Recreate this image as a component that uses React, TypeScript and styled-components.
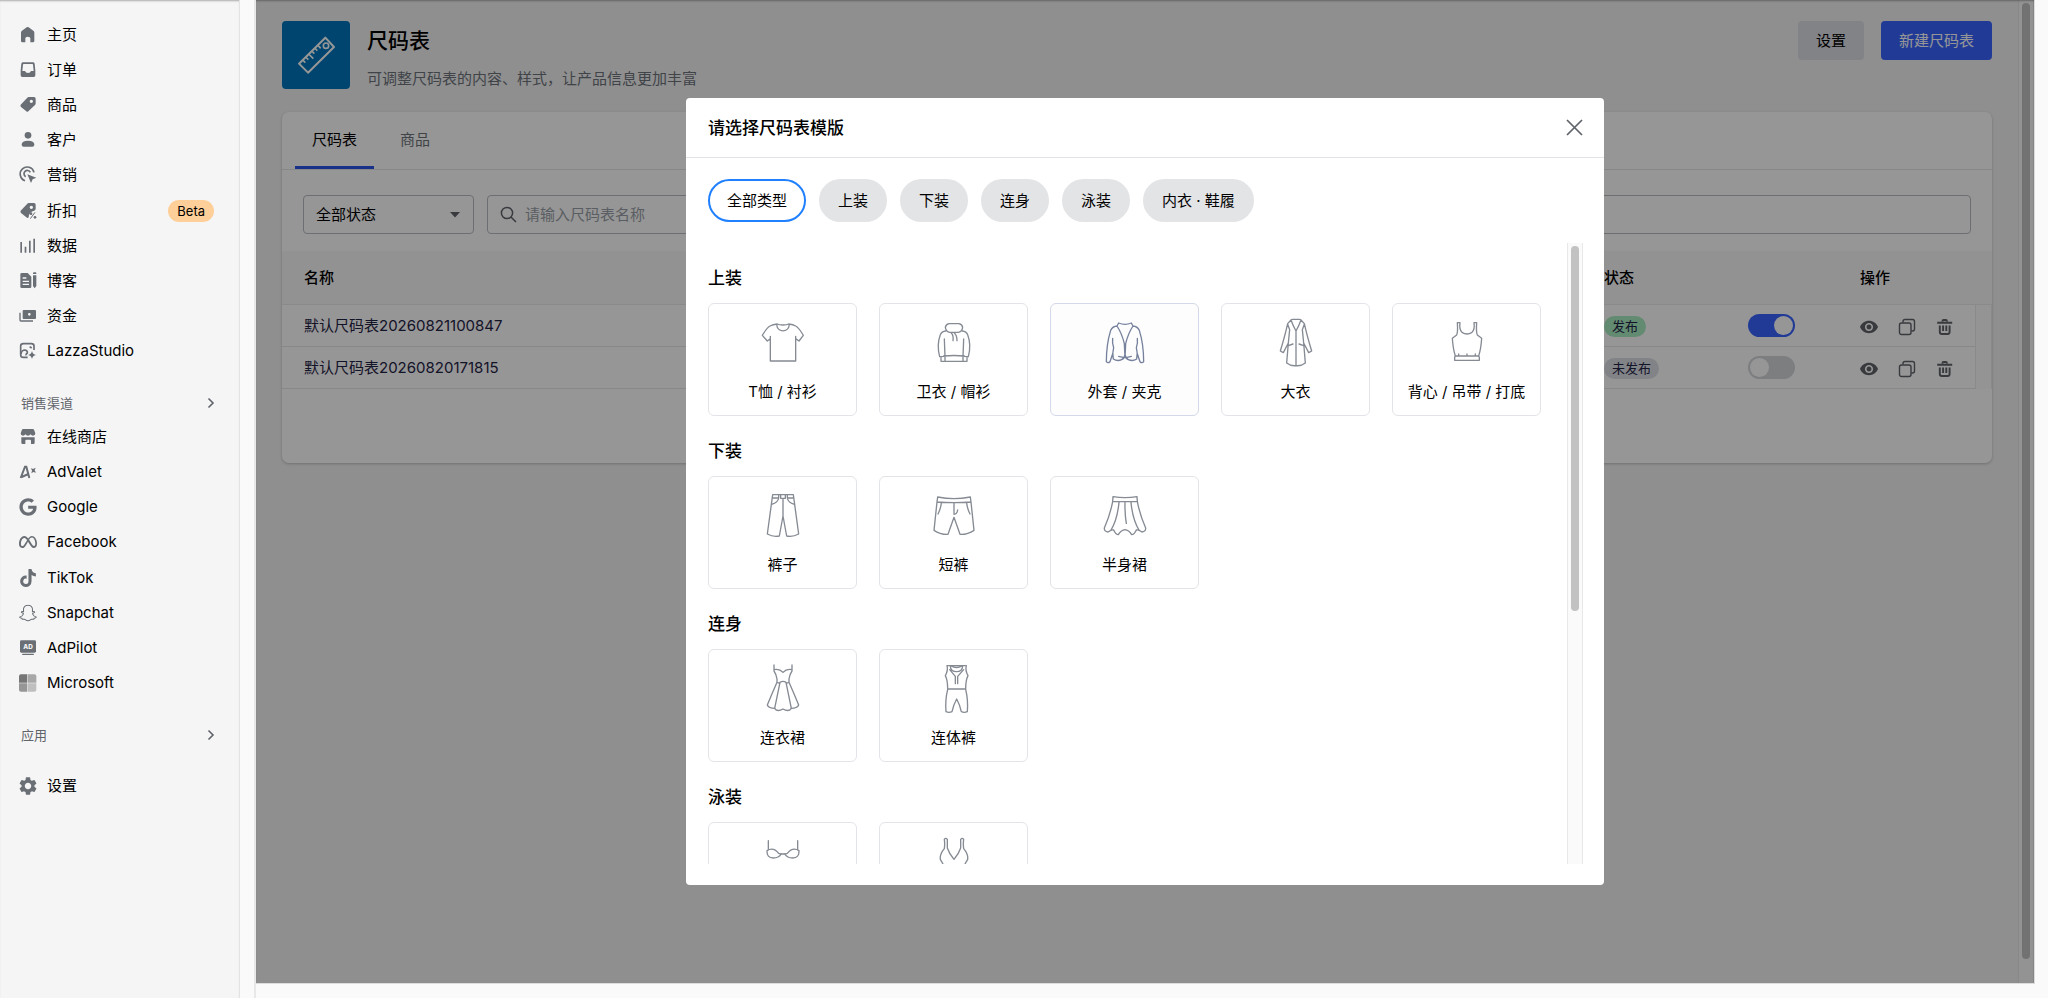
import React, { useState } from "react";
import styled, { createGlobalStyle } from "styled-components";
import { FaGoogle, FaTiktok } from "react-icons/fa";
import { SiMeta, SiSnapchat } from "react-icons/si";
import { MdSettings, MdVisibility } from "react-icons/md";

const GlobalStyle = createGlobalStyle`
  *, *::before, *::after { box-sizing: border-box; }
  body {
    margin: 0;
    background: #fafafa;
    color: #000;
    font-family: Inter, "Noto Sans CJK SC", sans-serif;
    font-size: 15px;
    line-height: 24px;
  }
  button, input, select { font: inherit; color: inherit; }
  ul { list-style: none; margin: 0; padding: 0; }
  h1, h2, h3, p { margin: 0; }
`;

/* ---------- shell ---------- */

const Shell = styled.div`
  display: flex;
  height: 100vh;
`;

const Sidebar = styled.nav`
  flex: none;
  width: 240px;
  padding: 17px 0;
  background: #f5f5f5;
  border-right: 1px solid #e3e3e3;
  box-shadow: inset 0 2px 2px -1px rgba(0, 0, 0, 0.3);
  overflow: hidden;
`;

const SidebarTrack = styled.div`
  flex: none;
  width: 16px;
  border-right: 2px solid #e8e8e8;
`;

const NavList = styled.ul<{ $height: number }>`
  display: grid;
  grid-auto-rows: 1fr;
  height: ${(p) => p.$height}px;
`;

const NavItem = styled.li`
  display: flex;
`;

const NavLink = styled.a`
  flex: 1;
  display: flex;
  align-items: center;
  gap: 10px;
  padding: 0 25px 0 19px;
  color: #000;
  text-decoration: none;
  svg {
    flex: none;
    width: 18px;
    height: 18px;
    color: #6a6e75;
  }
`;

const Beta = styled.span`
  margin-left: auto;
  padding: 0 9px;
  border-radius: 11px;
  background: #ffcf99;
  font-size: 13px;
  line-height: 22px;
`;

const SectionButton = styled.button`
  display: flex;
  align-items: center;
  justify-content: space-between;
  width: 100%;
  height: 33px;
  margin-top: 17px;
  padding: 0 24px 0 21px;
  border: 0;
  background: none;
  color: #5f636a;
  font-size: 13px;
`;

const SettingsList = styled(NavList)`
  margin-top: 17px;
`;

const Frame = styled.div`
  position: relative;
  flex: 1;
  display: flex;
  min-width: 0;
  margin: 0 13px 14px 0;
  border-right: 1px solid #dcdcdc;
  border-bottom: 1px solid #dcdcdc;
`;

const Page = styled.main`
  flex: 1;
  min-width: 0;
  padding: 21px 26px 0;
  background: #f3f3f3;
`;

const Track = styled.div<{ $width: number }>`
  flex: none;
  width: ${(p) => p.$width}px;
  padding: 3px 3px 0;
  border: 1px solid #e8e8e8;
  border-width: 0 1px;
  background: #fafafa;
`;

const Thumb = styled.div<{ $size: string }>`
  height: ${(p) => p.$size};
  border-radius: 5px;
  background: #c2c2c2;
`;

/* ---------- page header ---------- */

const PageHeader = styled.header`
  display: flex;
  align-items: flex-start;
  gap: 17px;
  margin-bottom: 21px;
`;

const AppLogo = styled.div`
  flex: none;
  width: 68px;
  height: 68px;
  border-radius: 4px;
  overflow: hidden;
  background: #0076bf;
  svg { display: block; width: 68px; height: 68px; }
`;

const Heading = styled.div`
  flex: 1;
`;

const Title = styled.h1`
  font-size: 21px;
  line-height: 40px;
  font-weight: 500;
`;

const Subtitle = styled.p`
  margin-top: 6px;
  color: #6e747d;
`;

const Actions = styled.div`
  display: flex;
  gap: 17px;
`;

const Button = styled.button<{ $primary?: boolean }>`
  height: 39px;
  padding: 0 18px;
  border: 0;
  border-radius: 4px;
  background: ${(p) => (p.$primary ? "#3864ff" : "#dcdfe6")};
  color: ${(p) => (p.$primary ? "#fff" : "#000")};
`;

/* ---------- list card ---------- */

const Card = styled.section`
  padding-bottom: 74px;
  border-radius: 7px;
  background: #fff;
  box-shadow: 0 1px 3px rgba(0, 0, 0, 0.22);
`;

const Tabs = styled.div`
  display: flex;
  gap: 9px;
  height: 58px;
  padding: 0 13px;
  border-bottom: 1px solid #e3e5e8;
`;

const Tab = styled.button<{ $active?: boolean }>`
  min-width: 64px;
  padding: 2px 17px 0;
  border: 0;
  border-bottom: 3px solid ${(p) => (p.$active ? "#2a52e8" : "transparent")};
  border-radius: 2px 2px 0 0;
  background: none;
  color: ${(p) => (p.$active ? "#000" : "#6e747d")};
`;

const Filters = styled.div`
  display: flex;
  gap: 13px;
  padding: 25px 21px 17px;
`;

const Field = styled.div<{ $grow?: boolean }>`
  flex: ${(p) => (p.$grow ? "1" : "0 0 171px")};
  display: flex;
  align-items: center;
  gap: 8px;
  height: 39px;
  padding: 0 12px;
  border: 1px solid #b9bcc2;
  border-radius: 4px;
  svg { flex: none; color: #5f636a; }
`;

const SelectBox = styled.select`
  flex: 1;
  min-width: 0;
  appearance: none;
  padding: 0;
  border: 0;
  background: none;
`;

const SearchInput = styled.input`
  flex: 1;
  min-width: 0;
  padding: 0;
  border: 0;
  background: none;
  &::placeholder { color: #9a9fa8; opacity: 1; }
`;

const Table = styled.table`
  width: 100%;
  table-layout: fixed;
  border-collapse: separate;
  border-spacing: 0;
`;

const Th = styled.th<{ $width?: number }>`
  width: ${(p) => (p.$width ? `${p.$width}px` : "auto")};
  height: 54px;
  padding: 0 17px;
  border-bottom: 1px solid #e9ebee;
  background: #f9f9f9;
  text-align: left;
  font-weight: 500;
  &:first-child { padding-left: 22px; }
  &:last-child { padding: 0; }
`;

const Td = styled.td`
  height: 42px;
  padding: 0 17px;
  border-bottom: 1px solid #e6e8eb;
  color: #1f2345;
  &:first-child { padding-left: 22px; }
`;

const GutterCell = styled.td`
  padding: 0;
  border: solid #ebebeb;
  border-width: 0 1px;
  background: #fcfcfc;
`;

const Tag = styled.span<{ $on: boolean }>`
  display: inline-block;
  padding: 0 8px;
  border-radius: 11px;
  background: ${(p) => (p.$on ? "#a9ecc2" : "#dcdfe6")};
  font-size: 13px;
  line-height: 21px;
`;

const Switch = styled.input`
  display: block;
  appearance: none;
  width: 47px;
  height: 23px;
  margin: 0;
  padding: 2px;
  border-radius: 12px;
  background: #d4d6d9;
  &::before {
    content: "";
    display: block;
    width: 19px;
    height: 19px;
    border-radius: 50%;
    background: #fff;
  }
  &:checked { background: #3864ff; }
  &:checked::before { margin-left: auto; }
`;

const RowActions = styled.div`
  display: flex;
  gap: 20px;
  padding-top: 3px;
`;

const IconButton = styled.button`
  display: flex;
  padding: 0;
  border: 0;
  background: none;
  color: #5f636a;
`;

/* ---------- dialog ---------- */

const Overlay = styled.div`
  position: absolute;
  inset: 0;
  display: flex;
  align-items: center;
  justify-content: center;
  background: rgba(0, 0, 0, 0.41);
  box-shadow: inset 0 2px 2px -1px rgba(0, 0, 0, 0.3);
`;

const Dialog = styled.div`
  display: flex;
  flex-direction: column;
  width: 918px;
  max-width: 94%;
  height: 80%;
  padding-bottom: 21px;
  border-radius: 4px;
  background: #fff;
`;

const DialogHeader = styled.header`
  flex: none;
  display: flex;
  align-items: center;
  justify-content: space-between;
  height: 60px;
  padding: 0 21px 0 22px;
  border-bottom: 1px solid #e1e3e6;
`;

const DialogTitle = styled.h2`
  font-size: 17px;
  font-weight: 500;
`;

const Pills = styled.div`
  flex: none;
  display: flex;
  flex-wrap: wrap;
  gap: 13px;
  padding: 21px 22px;
`;

const Pill = styled.button<{ $active: boolean }>`
  height: 43px;
  padding: 0 17px;
  border: 2px solid ${(p) => (p.$active ? "#2080ff" : "#e3e4e6")};
  border-radius: 22px;
  background: ${(p) => (p.$active ? "#fff" : "#e3e4e6")};
`;

const ScrollArea = styled.div`
  flex: 1;
  display: flex;
  min-height: 0;
  padding: 0 21px 0 22px;
`;

const Groups = styled.div`
  flex: 1;
  display: flex;
  flex-direction: column;
  gap: 22px;
  overflow: hidden;
  padding: 22px 26px 0 0;
`;

const Group = styled.section`
  flex: none;
`;

const GroupTitle = styled.h3`
  margin-bottom: 12px;
  font-size: 17px;
  line-height: 26px;
  font-weight: 500;
`;

const TemplateGrid = styled.div`
  display: grid;
  grid-template-columns: repeat(5, 1fr);
  gap: 22px;
`;

const TemplateCard = styled.button<{ $hover?: boolean }>`
  display: flex;
  flex-direction: column;
  align-items: center;
  gap: 13px;
  height: 113px;
  padding: 13px 0 0;
  border: 1px solid ${(p) => (p.$hover ? "#d3d9e8" : "#e3e4e8")};
  border-radius: 6px;
  background: ${(p) => (p.$hover ? "#fdfdfe" : "#fff")};
  white-space: nowrap;
  svg {
    flex: none;
    width: 50px;
    height: 50px;
    overflow: visible;
    color: ${(p) => (p.$hover ? "#76819c" : "#858a93")};
  }
`;

/* ---------- icons ---------- */

const Glyph = ({ children }: { children: React.ReactNode }) => (
  <svg viewBox="0 0 54 54" fill="currentColor" fillRule="evenodd" aria-hidden="true">
    {children}
  </svg>
);

const TAG = "M29 3H45Q50 3 50 8V22Q50 25 48 27L28 46Q25 49 22 46L6 33Q3 30 5 26L25 5Q27 3 29 3Z";

const navGlyphs: Record<string, React.ReactNode> = {
  home: (
    <Glyph>
      <path d="M6 20Q6 16 9 14L23 4Q26 2 29 4L43 14Q46 16 46 20V45Q46 49 42 49H34V37Q34 32 26 32Q19 32 19 37V49H10Q6 49 6 45Z" />
    </Glyph>
  ),
  orders: (
    <Glyph>
      <path d="M12 4H42Q46 4 47 8L49 28V43Q49 48 44 48H10Q5 48 5 43V28L7 8Q8 4 12 4ZM14 9Q12 9 12 11L10 30H18Q20 36 27 36Q34 36 36 30H44L42 11Q42 9 40 9Z" />
    </Glyph>
  ),
  tag: (
    <Glyph>
      <path d={`${TAG}M37 11A5 5 0 1 0 37 21A5 5 0 1 0 37 11Z`} />
    </Glyph>
  ),
  person: (
    <Glyph>
      <circle cx="27" cy="13" r="10" />
      <path d="M8 41Q8 29 27 29Q46 29 46 41Q46 47 40 47H14Q8 47 8 41Z" />
    </Glyph>
  ),
  target: (
    <Glyph>
      <g fill="none" stroke="currentColor" strokeWidth="5">
        <path d="M18 44A21 21 0 1 1 45 19" />
        <path d="M20 32A10 10 0 1 1 34 19" />
      </g>
      <path d="M25 25L52 35L41 40L36 51Z" />
    </Glyph>
  ),
  discount: (
    <Glyph>
      <path d="M29 3H45Q50 3 50 8V22L46 26Q30 28 29 46Q26 50 22 46L6 33Q3 30 5 26L25 5Q27 3 29 3ZM37 11A5 5 0 1 0 37 21A5 5 0 1 0 37 11Z" />
      <circle cx="36" cy="35" r="4" />
      <circle cx="48" cy="46" r="4" />
      <path d="M34 50L48 31" fill="none" stroke="currentColor" strokeWidth="3" />
    </Glyph>
  ),
  bars: (
    <Glyph>
      <path d="M4 15H9V47H4ZM17 29H22V47H17ZM30 11H35V47H30ZM43 5H48V47H43Z" />
    </Glyph>
  ),
  blog: (
    <Glyph>
      <path d="M8 3H26L37 14V44Q37 48 33 48H8Q4 48 4 44V7Q4 3 8 3ZM11 16V20H22V16ZM11 26V30H30V26ZM11 35V39H30V35Z" />
      <path d="M42 10H52V42L47 49L42 42ZM42 6V4Q42 1 45 1H49Q52 1 52 4V6Z" />
    </Glyph>
  ),
  money: (
    <Glyph>
      <path d="M14 9H48Q51 9 51 12V33Q51 36 48 36H14Q11 36 11 33V12Q11 9 14 9ZM31 18A4 4 0 1 0 31 26A4 4 0 1 0 31 18Z" />
      <path d="M3 17V39Q3 42 6 42H42" fill="none" stroke="currentColor" strokeWidth="4" />
    </Glyph>
  ),
  studio: (
    <Glyph>
      <g fill="none" stroke="currentColor" strokeWidth="5">
        <path d="M26 46H13Q5 46 5 38V12Q5 5 13 5H37Q45 5 45 12V24" />
        <path d="M6 36Q8 24 18 24Q26 25 25 33Q20 36 21 40" />
        <path d="M32 14L38 18" />
      </g>
      <path d="M39 27Q41 37 51 39Q41 41 39 51Q37 41 27 39Q37 37 39 27Z" />
    </Glyph>
  ),
  store: (
    <Glyph>
      <path d="M12 3H42Q44 3 45 5L49 16Q49 23 42 23Q37 23 35 19Q32 23 27 23Q22 23 19 19Q17 23 12 23Q5 23 5 16L9 5Q10 3 12 3Z" />
      <path d="M7 28H47V44Q47 48 43 48H36V38Q36 35 33 35H22Q19 35 19 38V48H11Q7 48 7 44Z" />
    </Glyph>
  ),
  advalet: (
    <Glyph>
      <path d="M5 45L18 11H22L31 45M8 42L28 33" fill="none" stroke="currentColor" strokeWidth="6" />
      <path d="M36 15L42 18L50 14L47 22L51 29L43 27L37 31L39 23Z" />
    </Glyph>
  ),
  adpilot: (
    <Glyph>
      <rect x="3" y="4" width="48" height="37" rx="4" />
      <rect x="9" y="44" width="36" height="4" rx="2" />
      <text x="27" y="29" textAnchor="middle" fontSize="19" fontWeight="800" fill="#f5f5f5">AD</text>
    </Glyph>
  ),
  microsoft: (
    <Glyph>
      <path d="M6 1H25V26H0V7Q0 1 6 1Z" fill="#767676" />
      <path d="M27 1H46Q52 1 52 7V26H27Z" fill="#a8a8a8" />
      <path d="M0 28H25V53H6Q0 53 0 47Z" fill="#969696" />
      <path d="M27 28H52V47Q52 53 46 53H27Z" fill="#bfbfbf" />
    </Glyph>
  ),
  google: <FaGoogle aria-hidden="true" />,
  meta: <SiMeta aria-hidden="true" />,
  tiktok: <FaTiktok aria-hidden="true" />,
  snapchat: <SiSnapchat viewBox="-1 -1 26 26" fill="none" stroke="currentColor" strokeWidth="1.5" aria-hidden="true" />,
  settings: <MdSettings viewBox="2 2 20 20" aria-hidden="true" />,
};

const Chevron = () => (
  <svg width="8" height="12" viewBox="0 0 8 12" fill="none" stroke="currentColor" strokeWidth="1.6" aria-hidden="true">
    <path d="M1.5 1.5L6 6L1.5 10.5" />
  </svg>
);

const RulerIcon = () => (
  <svg viewBox="0 0 204 204" fill="none" stroke="#fff" strokeWidth="6" strokeLinejoin="round" aria-hidden="true">
    <path d="M130 50L156 78L78 155L51 128Z" />
    <circle cx="132" cy="74" r="8" strokeWidth="5" />
    <path d="M62 117L70 125M71 108L79 116M80 99L94 113M89 90L97 98M98 81L106 89M107 72L116 82" strokeWidth="5" />
  </svg>
);

const CopyIcon = () => (
  <svg width="18" height="18" viewBox="0 0 18 18" fill="none" stroke="currentColor" strokeWidth="1.4" aria-hidden="true">
    <rect x="1.5" y="5" width="11.5" height="11.5" rx="2" />
    <path d="M5 4.6V3.4Q5 1.5 7 1.5H14.5Q16.5 1.5 16.5 3.5V11Q16.5 13 14.5 13H13.4" />
  </svg>
);

const TrashIcon = () => (
  <svg width="18" height="18" viewBox="0 0 18 18" fill="none" stroke="currentColor" strokeWidth="1.9" aria-hidden="true">
    <path d="M1.2 4.8H16.2M6.4 3.4Q6.4 2 7.6 2H9.8Q11 2 11 3.4M3.8 7.4V14Q3.8 16 5.8 16H11.6Q13.6 16 13.6 14V7.4M7.1 7.4V13M10.3 7.4V13" />
  </svg>
);

const garments: Record<string, string> = {
  tee: "M58 21C50 22 42 24 36 27C26 32 20 44 13 55L28 72L37 65M37 58V132H113V58M113 65L123 72L136 55C129 44 123 32 113 27C108 24 100 22 92 21M58 21C64 25 86 25 92 21M56 22C58 48 92 48 94 22",
  hoodie: "M60 20H90Q100 22 101 32Q98 45 88 46H62Q52 45 49 32Q50 22 60 20ZM50 42Q38 43 34 53C26 74 26 96 32 119L44 118M100 42Q112 43 116 53C124 74 124 96 118 119L106 118M46 66L48 118M104 66L102 118M44 117Q75 114 106 117M36 120V133H114V120M48 118V133M102 118V133M67 48Q74 55 72 71M76 48Q84 55 84 71",
  jacket: "M56 18Q75 26 94 18L99 27Q84 50 77 80L75 122L73 80Q66 50 51 27ZM51 27Q38 28 32 40C24 66 19 100 19 134Q24 140 30 134L38 110M99 27Q112 28 118 40C126 66 131 100 131 134Q126 140 120 134L112 110M38 64Q36 80 41 92Q36 110 40 126Q52 134 65 128Q74 124 75 112M112 64Q114 80 109 92Q114 110 110 126Q98 134 85 128Q76 124 75 112M56 118L72 122M94 118L78 122",
  coat: "M60 9L64 7H86L90 9Q84 26 75 42Q66 26 60 9ZM60 9L50 20Q42 56 28 102L37 107L52 78L56 38L50 22M90 9L100 20Q108 56 122 102L113 107L98 78L94 38L100 22M52 78L47 138Q60 148 75 146Q90 148 103 138L98 78M75 42V146M52 86L66 81M84 81L98 86",
  tank: "M46 17H54Q51 38 60 46Q75 56 90 46Q99 38 96 17H104Q102 46 106 54L119 64Q117 96 110 117H40Q33 96 31 64L44 54Q48 46 46 17ZM42 117Q38 117 38 121V130H112V121Q112 117 108 117M50 117V111M75 117V111M100 117V111",
  trousers: "M44 14H106L122 132Q104 142 86 138L75 78L64 138Q46 142 28 132ZM43 24H62M68 14V25H82V14M88 24H107M62 14V24Q60 38 41 43M88 14V24Q90 38 109 43M75 26V78",
  shorts: "M26 21Q75 31 124 21L126 36Q75 40 24 36ZM24 36L15 121Q34 134 57 133L75 82L93 133Q116 134 135 121L126 36M75 40V73Q84 73 86 60M37 38Q36 54 27 72M113 38Q114 54 123 72",
  skirt: "M39 20Q75 26 111 20L112 35H38ZM38 35Q30 76 13 114Q12 124 24 126M112 35Q120 76 137 114Q138 124 126 126M24 126Q35 118 41 120Q47 134 55 134Q64 120 75 119Q86 120 95 134Q103 134 109 120Q115 118 126 126M57 37Q52 90 32 122M75 37Q74 70 79 100M93 37Q98 90 118 122",
  dress: "M48 6V24Q54 32 57 48V58L43 90L28 126Q32 136 51 136M102 6V24Q96 32 93 48V58L107 90L122 126Q118 136 99 136M48 20Q64 16 75 28Q86 16 102 20M57 58Q66 62 66 58Q75 52 84 58Q84 62 93 58M66 58L50 136M84 58L100 136M50 136Q58 148 75 138Q92 148 100 136",
  jumpsuit: "M54 8H112Q108 22 117 38Q110 52 110 78H56Q56 52 49 38Q58 22 54 8ZM64 9Q64 26 83 26Q100 26 101 9M66 9Q83 18 99 9M62 20L79 40V62M104 20L86 40V62M56 79Q48 112 51 146Q60 150 69 146Q74 124 83 108Q92 124 97 146Q106 150 115 146Q118 112 110 79",
  bikini: "M31 14V42M119 14V42M27 44Q46 32 62 52Q75 57 88 52Q104 32 123 44Q124 66 104 66Q88 66 80 54H70Q62 66 46 66Q26 66 27 44Z",
  swimsuit: "M46 38Q48 24 46 10Q50 4 55 10V36Q60 52 75 70Q90 52 95 36V10Q100 4 104 10Q102 24 104 38Q118 54 116 70L108 84Q116 110 112 130H38Q34 110 42 84L34 70Q32 54 46 38Z",
};

const Garment = ({ name }: { name: string }) => (
  <svg viewBox="0 0 150 150" fill="none" stroke="currentColor" strokeWidth="4" strokeLinejoin="round" strokeLinecap="round" aria-hidden="true">
    <path d={garments[name]} />
  </svg>
);

/* ---------- data ---------- */

type NavEntry = { icon: string; label: string; beta?: boolean };

const primaryNav: NavEntry[] = [
  { icon: "home", label: "主页" },
  { icon: "orders", label: "订单" },
  { icon: "tag", label: "商品" },
  { icon: "person", label: "客户" },
  { icon: "target", label: "营销" },
  { icon: "discount", label: "折扣", beta: true },
  { icon: "bars", label: "数据" },
  { icon: "blog", label: "博客" },
  { icon: "money", label: "资金" },
  { icon: "studio", label: "LazzaStudio" },
];

const channelNav: NavEntry[] = [
  { icon: "store", label: "在线商店" },
  { icon: "advalet", label: "AdValet" },
  { icon: "google", label: "Google" },
  { icon: "meta", label: "Facebook" },
  { icon: "tiktok", label: "TikTok" },
  { icon: "snapchat", label: "Snapchat" },
  { icon: "adpilot", label: "AdPilot" },
  { icon: "microsoft", label: "Microsoft" },
];

const rows = [
  { name: "默认尺码表20260821100847", published: true },
  { name: "默认尺码表20260820171815", published: false },
];

const categories = ["全部类型", "上装", "下装", "连身", "泳装", "内衣 · 鞋履"];

type Template = { icon: string; label?: string };

const groups: { title: string; items: Template[] }[] = [
  {
    title: "上装",
    items: [
      { icon: "tee", label: "T恤 / 衬衫" },
      { icon: "hoodie", label: "卫衣 / 帽衫" },
      { icon: "jacket", label: "外套 / 夹克" },
      { icon: "coat", label: "大衣" },
      { icon: "tank", label: "背心 / 吊带 / 打底" },
    ],
  },
  {
    title: "下装",
    items: [
      { icon: "trousers", label: "裤子" },
      { icon: "shorts", label: "短裤" },
      { icon: "skirt", label: "半身裙" },
    ],
  },
  {
    title: "连身",
    items: [
      { icon: "dress", label: "连衣裙" },
      { icon: "jumpsuit", label: "连体裤" },
    ],
  },
  { title: "泳装", items: [{ icon: "bikini" }, { icon: "swimsuit" }] },
];

const NavEntries = ({ items }: { items: NavEntry[] }) => (
  <>
    {items.map((item) => (
      <NavItem key={item.label}>
        <NavLink href="#">
          {navGlyphs[item.icon]}
          {item.label}
          {item.beta && <Beta>Beta</Beta>}
        </NavLink>
      </NavItem>
    ))}
  </>
);

export default function App() {
  const [category, setCategory] = useState(categories[0]);
  const [published, setPublished] = useState(rows.map((r) => r.published));

  return (
    <Shell>
      <GlobalStyle />
      <Sidebar>
        <NavList $height={352}>
          <NavEntries items={primaryNav} />
        </NavList>
        <SectionButton type="button">
          销售渠道
          <Chevron />
        </SectionButton>
        <NavList $height={282}>
          <NavEntries items={channelNav} />
        </NavList>
        <SectionButton type="button">
          应用
          <Chevron />
        </SectionButton>
        <SettingsList $height={35}>
          <NavEntries items={[{ icon: "settings", label: "设置" }]} />
        </SettingsList>
      </Sidebar>
      <SidebarTrack />

      <Frame>
        <Page>
          <PageHeader>
            <AppLogo>
              <RulerIcon />
            </AppLogo>
            <Heading>
              <Title>尺码表</Title>
              <Subtitle>可调整尺码表的内容、样式，让产品信息更加丰富</Subtitle>
            </Heading>
            <Actions>
              <Button type="button">设置</Button>
              <Button type="button" $primary>新建尺码表</Button>
            </Actions>
          </PageHeader>

          <Card>
            <Tabs>
              <Tab type="button" $active>尺码表</Tab>
              <Tab type="button">商品</Tab>
            </Tabs>
            <Filters>
              <Field>
                <SelectBox aria-label="状态" defaultValue="all">
                  <option value="all">全部状态</option>
                </SelectBox>
                <svg width="12" height="7" viewBox="0 0 12 7" fill="currentColor" aria-hidden="true">
                  <path d="M1 1H11L6 6.5Z" />
                </svg>
              </Field>
              <Field $grow>
                <svg width="17" height="17" viewBox="0 0 17 17" fill="none" stroke="currentColor" strokeWidth="1.5" aria-hidden="true">
                  <circle cx="7" cy="7" r="5.6" />
                  <path d="M11 11L16 16" />
                </svg>
                <SearchInput aria-label="搜索" placeholder="请输入尺码表名称" />
              </Field>
            </Filters>
            <Table>
              <thead>
                <tr>
                  <Th>名称</Th>
                  <Th $width={144}>状态</Th>
                  <Th $width={112} aria-label="开关" />
                  <Th $width={132}>操作</Th>
                  <Th $width={17} aria-hidden="true" />
                </tr>
              </thead>
              <tbody>
                {rows.map((row, i) => (
                  <tr key={row.name}>
                    <Td>{row.name}</Td>
                    <Td>
                      <Tag $on={row.published}>{row.published ? "发布" : "未发布"}</Tag>
                    </Td>
                    <Td>
                      <Switch
                        type="checkbox"
                        aria-label={row.name}
                        checked={published[i]}
                        onChange={() => setPublished(published.map((v, n) => (n === i ? !v : v)))}
                      />
                    </Td>
                    <Td>
                      <RowActions>
                        <IconButton type="button" aria-label="预览">
                          <MdVisibility size={18} viewBox="1 2 22 20" />
                        </IconButton>
                        <IconButton type="button" aria-label="复制">
                          <CopyIcon />
                        </IconButton>
                        <IconButton type="button" aria-label="删除">
                          <TrashIcon />
                        </IconButton>
                      </RowActions>
                    </Td>
                    {i === 0 && <GutterCell rowSpan={rows.length} />}
                  </tr>
                ))}
              </tbody>
            </Table>
          </Card>
        </Page>
        <Track $width={16}>
          <Thumb $size="97.5%" />
        </Track>

        <Overlay>
          <Dialog role="dialog" aria-modal="true" aria-labelledby="dialog-title">
            <DialogHeader>
              <DialogTitle id="dialog-title">请选择尺码表模版</DialogTitle>
              <IconButton type="button" aria-label="关闭">
                <svg width="17" height="17" viewBox="0 0 17 17" fill="none" stroke="currentColor" strokeWidth="1.7" aria-hidden="true">
                  <path d="M1 1L16 16M16 1L1 16" />
                </svg>
              </IconButton>
            </DialogHeader>
            <Pills>
              {categories.map((c) => (
                <Pill key={c} type="button" $active={c === category} onClick={() => setCategory(c)}>
                  {c}
                </Pill>
              ))}
            </Pills>
            <ScrollArea>
              <Groups>
                {groups.map((g) => (
                  <Group key={g.title}>
                    <GroupTitle>{g.title}</GroupTitle>
                    <TemplateGrid>
                      {g.items.map(({ icon, label }) => (
                        <TemplateCard key={icon} type="button" aria-label={label ?? g.title} $hover={icon === "jacket"}>
                          <Garment name={icon} />
                          {label}
                        </TemplateCard>
                      ))}
                    </TemplateGrid>
                  </Group>
                ))}
              </Groups>
              <Track $width={16}>
                <Thumb $size="59%" />
              </Track>
            </ScrollArea>
          </Dialog>
        </Overlay>
      </Frame>
    </Shell>
  );
}
